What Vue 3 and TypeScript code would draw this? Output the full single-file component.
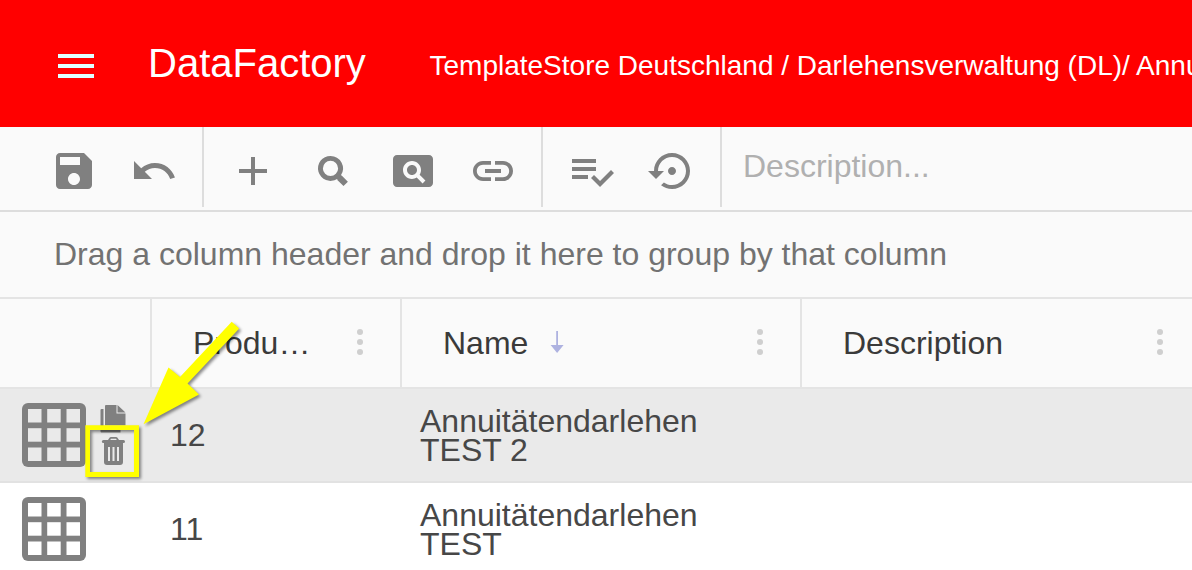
<script setup lang="ts">
interface Icon {
  name: string
  path: string
}

interface Row {
  id: number
  name: string
  hovered: boolean
}

const fileIcons: Icon[] = [
  { name: 'save', path: 'M17 3H5c-1.11 0-2 .9-2 2v14c0 1.1.89 2 2 2h14c1.1 0 2-.9 2-2V7l-4-4zm-5 16c-1.66 0-3-1.34-3-3s1.34-3 3-3 3 1.34 3 3-1.34 3-3 3zm3-10H5V5h10v4z' },
  { name: 'undo', path: 'M12.5 8c-2.65 0-5.05.99-6.9 2.6L2 7v9h9l-3.62-3.62c1.39-1.16 3.16-1.88 5.12-1.88 3.54 0 6.55 2.31 7.6 5.5l2.37-.78C21.08 11.03 17.15 8 12.5 8z' },
]

const editIcons: Icon[] = [
  { name: 'add', path: 'M19 13h-6v6h-2v-6H5v-2h6V5h2v6h6v2z' },
  { name: 'search', path: 'M10.75 4.450a6.250 6.250 0 1 0 3.300 11.550l.1 0 0 .45 3.100 3.100 2.200-2.200-3.100-3.100-.4-.1A6.250 6.250 0 0 0 10.75 4.450zM10.75 6.900a3.800 3.800 0 1 1 0 7.600 3.800 3.800 0 0 1 0-7.600z' },
  { name: 'pageview', path: 'M11.5 9C10.12 9 9 10.12 9 11.5s1.12 2.5 2.5 2.5 2.5-1.12 2.5-2.5S12.88 9 11.5 9zM20 4H4c-1.1 0-2 .9-2 2v12c0 1.1.9 2 2 2h16c1.1 0 2-.9 2-2V6c0-1.1-.9-2-2-2zm-3.21 14.21l-2.91-2.91c-.69.44-1.51.7-2.39.7C9.01 16 7 13.99 7 11.5S9.01 7 11.5 7 16 9.01 16 11.5c0 .88-.26 1.69-.7 2.39l2.91 2.9-1.42 1.42z' },
  { name: 'link', path: 'M3.9 12c0-1.71 1.39-3.1 3.1-3.1h4V7H7c-2.76 0-5 2.24-5 5s2.24 5 5 5h4v-1.9H7c-1.71 0-3.1-1.39-3.1-3.1zM8 13h8v-2H8v2zm9-6h-4v1.9h4c1.71 0 3.1 1.39 3.1 3.1s-1.39 3.1-3.1 3.1h-4V17h4c2.76 0 5-2.24 5-5s-2.24-5-5-5z' },
]

const historyIcons: Icon[] = [
  { name: 'check', path: 'M14 10H2v2h12v-2zm0-4H2v2h12V6zM2 16h8v-2H2v2zm19.5-4.5L23 13l-6.99 7-4.51-4.5L13 14l3.01 3 5.49-5.5z' },
  { name: 'restore', path: 'M14 12c0-1.1-.9-2-2-2s-2 .9-2 2 .9 2 2 2 2-.9 2-2zm-2-9c-4.97 0-9 4.03-9 9H0l4 4 4-4H5c0-3.87 3.13-7 7-7s7 3.13 7 7-3.13 7-7 7c-1.51 0-2.91-.49-4.06-1.3l-1.42 1.44C8.04 20.3 9.94 21 12 21c4.97 0 9-4.03 9-9s-4.03-9-9-9z' },
]

const rows: Row[] = [
  { id: 12, name: 'Annuitätendarlehen TEST 2', hovered: true },
  { id: 11, name: 'Annuitätendarlehen TEST', hovered: false },
]

const cellOffsets: number[] = [6, 25.2, 44.5]
</script>

<template>
  <div class="app">
    <header class="topbar">
      <button class="burger" aria-label="Menu"><i></i><i></i><i></i></button>
      <h1 class="title">DataFactory</h1>
      <span class="crumbs">TemplateStore Deutschland / Darlehensverwaltung (DL)/ Annuitätendarlehen</span>
    </header>

    <div class="toolbar">
      <div class="group file">
        <svg v-for="icon in fileIcons" :key="icon.name" class="tool" viewBox="0 0 24 24"><path :d="icon.path" /></svg>
      </div>
      <div class="group edit">
        <svg v-for="icon in editIcons" :key="icon.name" class="tool" viewBox="0 0 24 24"><path fill-rule="evenodd" :d="icon.path" /></svg>
      </div>
      <div class="group history">
        <svg v-for="icon in historyIcons" :key="icon.name" class="tool" viewBox="0 0 24 24"><path :d="icon.path" /></svg>
      </div>
      <input class="filter" type="text" placeholder="Description..." />
    </div>

    <div class="grouping">Drag a column header and drop it here to group by that column</div>

    <div class="grid head">
      <div class="th"></div>
      <div class="th">
        <span class="label">Produ…</span>
        <span class="dots"><i></i><i></i><i></i></span>
      </div>
      <div class="th">
        <span class="label">Name</span>
        <svg class="sort" viewBox="0 0 14 22"><path d="M6.200 0h1.800v14h5.600L7.100 22 .6 14h5.600z" /></svg>
        <span class="dots"><i></i><i></i><i></i></span>
      </div>
      <div class="th">
        <span class="label">Description</span>
        <span class="dots"><i></i><i></i><i></i></span>
      </div>
    </div>

    <div v-for="row in rows" :key="row.id" class="grid row" :class="{ hovered: row.hovered }">
      <div class="actions">
        <svg class="table-icon" viewBox="0 0 64 64">
          <rect class="frame" width="64" height="64" rx="6" />
          <template v-for="y in cellOffsets" :key="y">
            <rect v-for="x in cellOffsets" :key="x" class="hole" :x="x" :y="y" width="13.5" height="13.500" />
          </template>
        </svg>
        <div v-if="row.hovered" class="mini">
          <svg class="copy" viewBox="0 0 26 28">
            <path d="M6 0h10.500v8.500H25.500V20.500H5V1q0-1 1-1zM17.500 0l8 7.500h-8zM.5 5q0-1 1-1H3.500V23.500H20.500v4H1.500q-1 0-1-1z" />
          </svg>
          <svg class="trash" viewBox="0 0 26 28">
            <path fill-rule="evenodd" d="M8 3 9.500.8Q10 0 11 0h5q1 0 1.500.8L19 3h4.500q1.500 0 1.500 1.500T23.500 6H23v19q0 3-3 3H7q-3 0-3-3V6h-.5Q1.800 6 1.800 4.500T3.500 3zM10.200 3h6.600l-.8-1.200h-5zM8 10v14h2V10zm4.500 0v14h2V10zm4.500 0v14h2V10z" />
          </svg>
        </div>
      </div>
      <div class="num">{{ row.id }}</div>
      <div class="name">{{ row.name }}</div>
      <div></div>
    </div>

    <svg class="annotation" viewBox="0 0 170 180">
      <path class="shape" d="M150.700 1.800 158.200 8.500 106.500 63.500 118 74.500 62.500 104.300 87.500 47.500 99 57z" />
      <path class="shape" fill-rule="evenodd" d="M4.300 105.200h53.700v51.800h-53.700zM9 110v42h44v-42z" />
    </svg>
  </div>
</template>

<style>
html,
body {
  margin: 0;
  overflow: hidden;
}
</style>

<style scoped>
.app {
  position: relative;
  width: 1192px;
  height: 570px;
  overflow: hidden;
  background: #fff;
  font: 32px/36px "Liberation Sans", Arial, sans-serif;
}

.topbar {
  display: flex;
  align-items: center;
  box-sizing: border-box;
  height: 127px;
  padding-left: 58px;
  padding-top: 2px;
  background: #f00;
  color: #fff;
  white-space: nowrap;
}

.burger {
  display: flex;
  flex: none;
  flex-direction: column;
  gap: 6px;
  width: 36px;
  padding: 3px 0 0;
  border: 0;
  background: none;
}

.burger i {
  height: 4px;
  background: #e0ffff;
}

.title {
  flex: none;
  width: 281.500px;
  margin: 0 0 3px 54px;
  font-size: 40px;
  font-weight: 400;
  line-height: 46px;
}

.crumbs {
  padding-top: 2px;
  font-size: 28px;
}

.toolbar {
  display: flex;
  height: 83px;
  border-bottom: 2px solid #ddd;
  background: #fafafa;
}

.group {
  display: flex;
  box-sizing: border-box;
  height: 80px;
  padding-top: 20px;
  border-right: 2px solid #ddd;
}

.file {
  width: 204px;
  padding-left: 50px;
  gap: 32px;
}

.edit {
  width: 339px;
  padding-left: 25px;
  gap: 32px;
}

.history {
  width: 179px;
  padding-left: 25px;
  gap: 32px;
}

.tool {
  flex: none;
  width: 48px;
  height: 48px;
  fill: #808080;
}

.filter {
  width: 440px;
  height: 38px;
  margin: 20px 0 0 21px;
  padding: 0;
  border: 0;
  outline: 0;
  background: none;
  font: inherit;
}

.filter::placeholder {
  color: #b0b0b0;
  opacity: 1;
}

.grouping {
  box-sizing: border-box;
  height: 87px;
  padding: 24px 0 0 54px;
  border-bottom: 2px solid #e4e4e4;
  background: #fafafa;
  color: #727272;
  white-space: nowrap;
}

.grid {
  display: grid;
  grid-template-columns: 152px 250px 400px 400px;
  width: 1202px;
}

.head {
  height: 88px;
  border-bottom: 2px solid #e4e4e4;
  background: #fafafa;
  color: #3a3a3a;
}

.th {
  display: flex;
  align-items: center;
  padding: 0 37px 0 41px;
  border-right: 2px solid #e4e4e4;
}

.sort {
  width: 14px;
  height: 22px;
  margin: 0 0 2px 22px;
  fill: #aeb2e0;
}

.dots {
  display: flex;
  flex-direction: column;
  gap: 4px;
  margin-left: auto;
  margin-bottom: 2px;
}

.dots i {
  width: 6px;
  height: 6px;
  border-radius: 50%;
  background: #cfcfcf;
}

.row {
  align-items: center;
  height: 92px;
  border-bottom: 2px solid #e2e2e2;
  background: #fff;
  color: #474747;
}

.hovered {
  background: #eaeaea;
}

.actions {
  display: flex;
  padding-left: 22px;
}

.table-icon {
  width: 64px;
  height: 64px;
}

.frame {
  fill: #808080;
}

.hole {
  fill: #fff;
}

.hovered .hole {
  fill: #eaeaea;
}

.mini {
  display: flex;
  flex-direction: column;
  gap: 4px;
  margin: 2px 0 0 14px;
  fill: #808080;
}

.copy,
.trash {
  width: 26px;
  height: 28px;
}

.num {
  padding-left: 18px;
}

.name {
  width: 290px;
  padding: 2px 0 0 18px;
  line-height: 29px;
}

.annotation {
  position: absolute;
  left: 81px;
  top: 320px;
  width: 170px;
  height: 180px;
  pointer-events: none;
}

.shape {
  fill: #ff0;
  filter: drop-shadow(2.500px 2.500px 1.500px rgba(0, 0, 0, 0.45));
}
</style>
